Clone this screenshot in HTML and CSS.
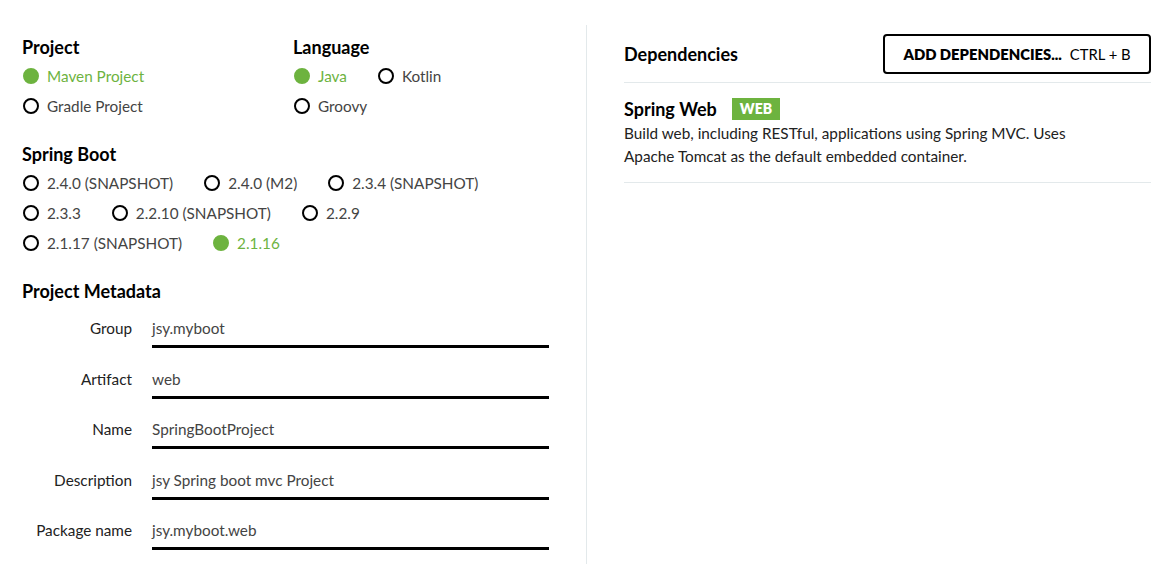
FILE: index.html
```html
<!DOCTYPE html>
<html lang="en">
<head>
<meta charset="utf-8">
<title>Spring Initializr</title>
<link rel="stylesheet" href="styles.css">
</head>
<body>
<div class="page">
  <section class="left">
    <div class="top-grid">
      <div class="group">
        <h2 class="title">Project</h2>
        <div class="radios col">
          <div class="radio checked"><span class="dot"></span><span class="lbl">Maven Project</span></div>
          <div class="radio"><span class="dot"></span><span class="lbl">Gradle Project</span></div>
        </div>
      </div>
      <div class="group">
        <h2 class="title">Language</h2>
        <div class="radios wrap lang">
          <div class="radio checked"><span class="dot"></span><span class="lbl">Java</span></div>
          <div class="radio"><span class="dot"></span><span class="lbl">Kotlin</span></div>
          <div class="radio"><span class="dot"></span><span class="lbl">Groovy</span></div>
        </div>
      </div>
    </div>
    <div class="group boot">
      <h2 class="title">Spring Boot</h2>
      <div class="radios rows">
        <div class="row">
          <div class="radio"><span class="dot"></span><span class="lbl">2.4.0 (SNAPSHOT)</span></div>
          <div class="radio"><span class="dot"></span><span class="lbl">2.4.0 (M2)</span></div>
          <div class="radio"><span class="dot"></span><span class="lbl">2.3.4 (SNAPSHOT)</span></div>
        </div>
        <div class="row">
          <div class="radio"><span class="dot"></span><span class="lbl">2.3.3</span></div>
          <div class="radio"><span class="dot"></span><span class="lbl">2.2.10 (SNAPSHOT)</span></div>
          <div class="radio"><span class="dot"></span><span class="lbl">2.2.9</span></div>
        </div>
        <div class="row">
          <div class="radio"><span class="dot"></span><span class="lbl">2.1.17 (SNAPSHOT)</span></div>
          <div class="radio checked"><span class="dot"></span><span class="lbl">2.1.16</span></div>
        </div>
      </div>
    </div>
    <div class="group meta">
      <h2 class="title">Project Metadata</h2>
      <div class="fields">
        <div class="field"><label class="flabel">Group</label><div class="input">jsy.myboot</div></div>
        <div class="field"><label class="flabel">Artifact</label><div class="input">web</div></div>
        <div class="field"><label class="flabel">Name</label><div class="input">SpringBootProject</div></div>
        <div class="field"><label class="flabel">Description</label><div class="input">jsy Spring boot mvc Project</div></div>
        <div class="field"><label class="flabel">Package name</label><div class="input">jsy.myboot.web</div></div>
      </div>
    </div>
  </section>
  <section class="right">
    <div class="dep-head">
      <h2 class="title">Dependencies</h2>
      <button class="add-btn"><strong>ADD DEPENDENCIES...</strong><span class="kbd">CTRL + B</span></button>
    </div>
    <div class="dep-item">
      <div class="dep-name"><strong>Spring Web</strong><span class="badge">WEB</span></div>
      <p class="dep-desc">Build web, including RESTful, applications using Spring MVC. Uses<br>Apache Tomcat as the default embedded container.</p>
    </div>
  </section>
</div>
</body>
</html>
```
FILE: styles.css
```css
html, body {
  margin: 0;
  padding: 0;
  background: #fff;
}
body {
  font-family: "Lato", "Open Sans", sans-serif;
  color: #222;
  font-size: 15px;
}
.page {
  display: flex;
  height: 564px;
  overflow: hidden;
}
.left {
  width: 586px;
  flex: none;
  padding: 36px 0 0 22px;
  box-sizing: border-box;
}
.right {
  flex: 1;
  border-left: 1px solid #e3e9eb;
  margin-top: 25px;
  padding: 9px 7px 0 37px;
}
.title {
  margin: 0;
  font-size: 18px;
  font-weight: 700;
  color: #000;
  line-height: 22px;
}
.top-grid {
  display: grid;
  grid-template-columns: 271px 1fr;
}
.radios {
  margin-top: 3px;
}
.col {
  display: flex;
  flex-direction: column;
}
.wrap {
  display: flex;
  flex-wrap: wrap;
  width: 180px;
}
.radio {
  display: flex;
  align-items: center;
  height: 30px;
  margin-right: 30px;
  color: #444;
  font-size: 15.3px;
}
.dot {
  width: 12px;
  height: 12px;
  border: 2px solid #000;
  border-radius: 50%;
  margin: 0 8px 0 1px;
  flex: none;
}
.radio.checked .dot {
  border-color: #6db33f;
  background: #6db33f;
}
.radio.checked {
  color: #6db33f;
}
.boot {
  margin-top: 22px;
}
.row {
  display: flex;
}
.meta {
  margin-top: 22px;
}
.fields {
  margin-top: 10px;
}
.field {
  display: flex;
  align-items: flex-start;
  height: 50.5px;
}
.flabel {
  width: 110px;
  text-align: right;
  color: #222;
  padding-top: 6px;
  line-height: 20px;
  font-size: 15.3px;
}
.input {
  margin-left: 20px;
  width: 397px;
  height: 27px;
  border-bottom: 3px solid #000;
  padding-top: 6px;
  color: #444;
  font-size: 15.3px;
  line-height: 20px;
}
.dep-head {
  display: flex;
  justify-content: space-between;
  align-items: center;
  border-bottom: 1px solid #e3e9eb;
  padding-bottom: 8px;
}
.add-btn {
  font-family: inherit;
  background: #fff;
  border: 2px solid #000;
  border-radius: 4px;
  width: 268px;
  height: 40px;
  font-size: 14.8px;
  color: #000;
  display: flex;
  align-items: center;
  justify-content: center;
  gap: 8px;
  padding: 0;
}
.add-btn strong {
  font-weight: 800;
}
.kbd {
  font-weight: 400;
}
.dep-item {
  border-bottom: 1px solid #e3e9eb;
  padding: 15px 0 14px;
}
.dep-name {
  display: flex;
  align-items: center;
  gap: 15px;
  font-size: 18px;
  color: #000;
}
.badge {
  background: #6db33f;
  color: #fff;
  font-weight: 800;
  font-size: 14px;
  padding: 0 8px;
  height: 22px;
  line-height: 22px;
}
.dep-desc {
  margin: 2px 0 0;
  line-height: 23px;
  color: #222;
  font-size: 15.3px;
}
```
